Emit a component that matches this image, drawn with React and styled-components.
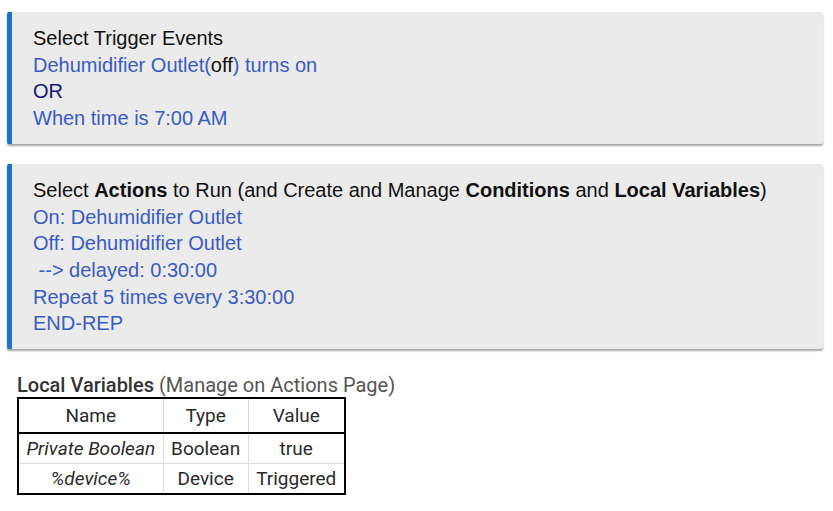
import styled, { createGlobalStyle } from "styled-components";

const Global = createGlobalStyle`
  html, body {
    margin: 0;
    background: #ffffff;
  }
`;

const Page = styled.div`
  padding: 12px 10px 0 7px;
  display: flex;
  flex-direction: column;
  gap: 20px;
  font-family: "Liberation Sans", Arial, sans-serif;
`;

const Panel = styled.section`
  background: #ebebeb;
  border-left: 5px solid #1f74c8;
  border-radius: 2px;
  box-shadow: 0 2px 2px rgba(0, 0, 0, 0.35);
  padding: 13px 16px 12px 21px;
  font-size: 20px;
  line-height: 26.7px;
  color: #111111;
`;

const Line = styled.div`
  color: ${(p) => (p.$tone === "blue" ? "#3a5bc6" : p.$tone === "navy" ? "#17147a" : "#111111")};
  white-space: pre;
`;

const Plain = styled.span`
  color: #111111;
`;

const Vars = styled.div`
  padding-left: 10px;
  margin-top: 4px;
  font-family: Roboto, "Liberation Sans", sans-serif;
  color: #555555;
`;

const VarsTitle = styled.div`
  font-size: 20px;
  line-height: 24px;

  strong {
    font-weight: 500;
    color: #333333;
  }
`;

const Table = styled.table`
  border-collapse: collapse;
  border: 2px solid #000000;
  font-size: 19px;
  color: #2a2a2a;
`;

const Th = styled.th`
  font-weight: 400;
  height: 33px;
  padding: 0 7.5px;
  border-left: 1px solid #d6d6d6;
  border-bottom: 2px solid #000000;
  text-align: center;
`;

const Td = styled.td`
  height: 29px;
  padding: 0 7.5px;
  border: 1px solid #dddddd;
  text-align: center;
  font-style: ${(p) => (p.$italic ? "italic" : "normal")};
`;

const variables = [
  { name: "Private Boolean", type: "Boolean", value: "true" },
  { name: "%device%", type: "Device", value: "Triggered" },
];

export default function App() {
  return (
    <Page>
      <Global />
      <Panel>
        <Line>Select Trigger Events</Line>
        <Line $tone="blue">
          Dehumidifier Outlet(<Plain>off</Plain>) turns on
        </Line>
        <Line $tone="navy">OR</Line>
        <Line $tone="blue">When time is 7:00 AM</Line>
      </Panel>

      <Panel>
        <Line>
          Select <b>Actions</b> to Run (and Create and Manage <b>Conditions</b> and{" "}
          <b>Local Variables</b>)
        </Line>
        <Line $tone="blue">On: Dehumidifier Outlet</Line>
        <Line $tone="blue">Off: Dehumidifier Outlet</Line>
        <Line $tone="blue"> --&gt; delayed: 0:30:00</Line>
        <Line $tone="blue">Repeat 5 times every 3:30:00</Line>
        <Line $tone="blue">END-REP</Line>
      </Panel>

      <Vars>
        <VarsTitle>
          <strong>Local Variables</strong> (Manage on Actions Page)
        </VarsTitle>
        <Table>
          <thead>
            <tr>
              <Th>Name</Th>
              <Th>Type</Th>
              <Th>Value</Th>
            </tr>
          </thead>
          <tbody>
            {variables.map((v) => (
              <tr key={v.name}>
                <Td $italic>{v.name}</Td>
                <Td>{v.type}</Td>
                <Td>{v.value}</Td>
              </tr>
            ))}
          </tbody>
        </Table>
      </Vars>
    </Page>
  );
}
